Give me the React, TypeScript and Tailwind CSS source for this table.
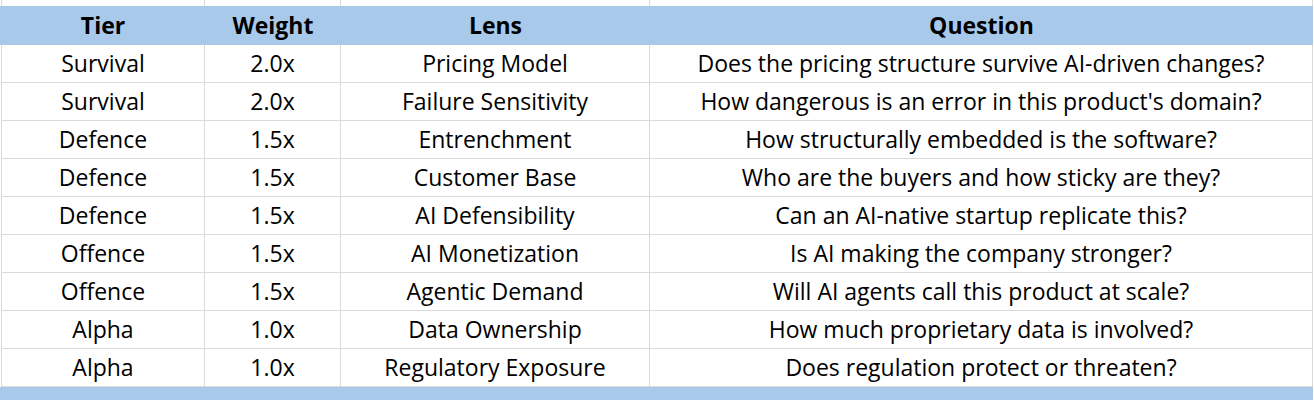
import React from "react";

const rows: [string, string, string, string][] = [
  ["Survival", "2.0x", "Pricing Model", "Does the pricing structure survive AI-driven changes?"],
  ["Survival", "2.0x", "Failure Sensitivity", "How dangerous is an error in this product's domain?"],
  ["Defence", "1.5x", "Entrenchment", "How structurally embedded is the software?"],
  ["Defence", "1.5x", "Customer Base", "Who are the buyers and how sticky are they?"],
  ["Defence", "1.5x", "AI Defensibility", "Can an AI-native startup replicate this?"],
  ["Offence", "1.5x", "AI Monetization", "Is AI making the company stronger?"],
  ["Offence", "1.5x", "Agentic Demand", "Will AI agents call this product at scale?"],
  ["Alpha", "1.0x", "Data Ownership", "How much proprietary data is involved?"],
  ["Alpha", "1.0x", "Regulatory Exposure", "Does regulation protect or threaten?"],
];

const bodyW = ["w-[204px] border-l", "w-[136px]", "w-[309px]", "w-[663px]"];
const headW = ["w-[204px]", "w-[136px]", "w-[309px]", "w-[663px]"];

export default function App() {
  return (
    <div
      className="w-[1314px] h-[400px] overflow-hidden bg-white text-black"
      style={{ fontFamily: '"Open Sans", "Noto Sans", sans-serif' }}
    >
      <div className="flex h-[6px] pl-[1px]">
        {bodyW.map((w, i) => (
          <div key={i} className={`${w} shrink-0 border-r border-[#dadada]`} />
        ))}
      </div>
      <div className="flex h-[39px] w-[1313px] bg-[#a9c9eb] pl-[1px] font-bold text-[23px] leading-none">
        {["Tier", "Weight", "Lens", "Question"].map((t, i) => (
          <div key={i} className={`${headW[i]} shrink-0 flex items-center justify-center`}>
            {t}
          </div>
        ))}
      </div>
      {rows.map((r, ri) => (
        <div key={ri} className="flex h-[38px] pl-[1px] text-[23px] leading-none">
          {r.map((c, ci) => (
            <div
              key={ci}
              className={`${bodyW[ci]} shrink-0 flex items-center justify-center border-r border-b border-[#dadada]`}
            >
              {c}
            </div>
          ))}
        </div>
      ))}
      <div className="h-[14px] w-[1313px] bg-[#a9c9eb]" />
    </div>
  );
}
